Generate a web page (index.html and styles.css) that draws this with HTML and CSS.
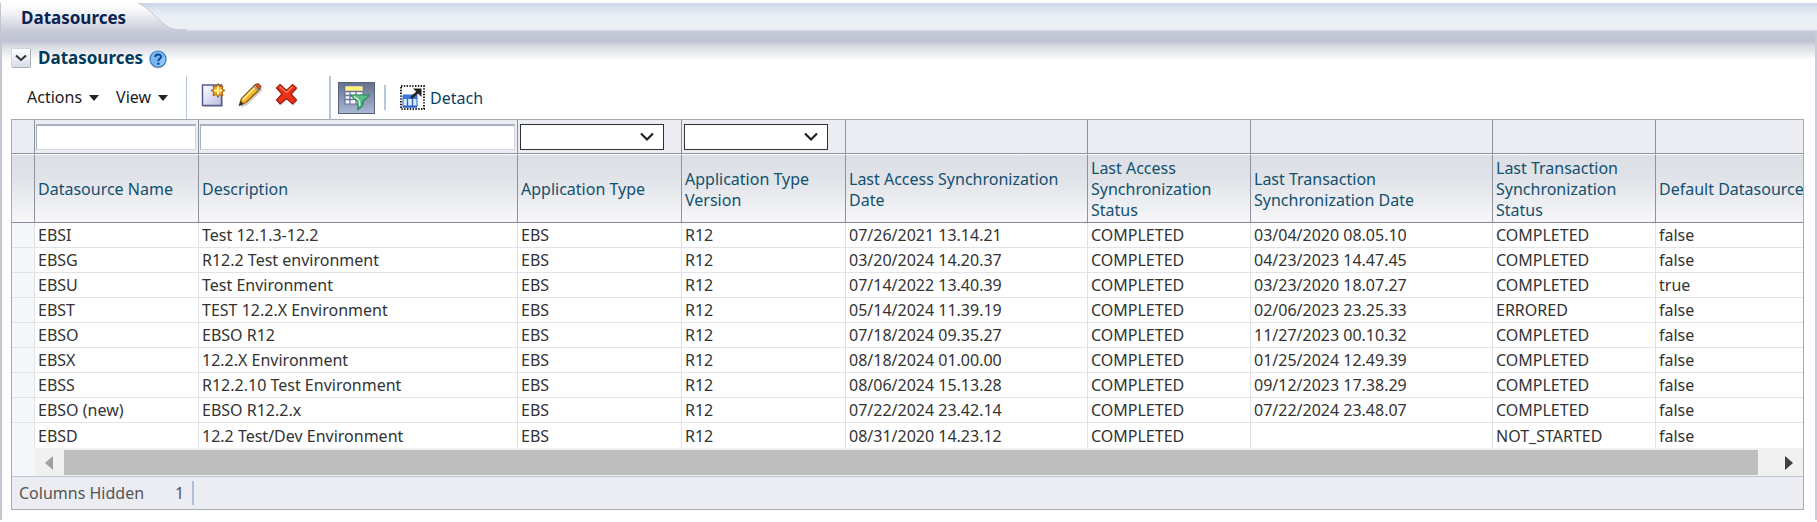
FILE: index.html
```html
<!DOCTYPE html>
<html lang="en">
<head>
<meta charset="utf-8">
<title>Datasources</title>
<link rel="stylesheet" href="styles.css">
</head>
<body>
<header class="tabbar">
  <a class="tab" href="#datasources">Datasources</a>
  <svg class="tab-edge" width="50" height="28" viewBox="0 0 50 28" aria-hidden="true">
    <defs>
      <linearGradient id="edge" x1="0" y1="0" x2="0" y2="1"><stop offset="0" stop-color="#fff"/><stop offset=".35" stop-color="#f2f3f7"/><stop offset="1" stop-color="#c9ccda"/></linearGradient>
    </defs>
    <path d="M0 0H1C11 4 17 13 28 22C33 26 38 27 50 27V28H0Z" fill="url(#edge)"/>
    <path d="M1 0C11 4 17 13 28 22C33 26 38 27 50 27" fill="none" stroke="#c3c6cf"/>
  </svg>
</header>
<main class="panel" id="datasources">
  <div class="heading">
    <button class="disclose" type="button" aria-label="Collapse Datasources"><svg width="12" height="8" viewBox="0 0 12 8"><path d="M1 1.500L6 6L11 1.500" fill="none" stroke="#333" stroke-width="2"/></svg></button>
    <h1 class="title">Datasources</h1>
    <button class="help" type="button" aria-label="Help"><svg width="18" height="19" viewBox="0 0 18 19">
      <defs><linearGradient id="help" x1="0" y1="0" x2="1" y2="1"><stop offset="0" stop-color="#8cc4f5"/><stop offset=".5" stop-color="#77b3f0"/><stop offset="1" stop-color="#a9ddff"/></linearGradient></defs>
      <circle cx="9" cy="10" r="8.500" fill="#a8adb5"/><circle cx="9" cy="9" r="8" fill="url(#help)" stroke="#3a7bc4" stroke-width="1.200"/>
      <path d="M6.200 7C6.200 3.600 12 3.600 12 6.800C12 8.900 9.300 8.800 9.300 11.200" fill="none" stroke="#0d4a94" stroke-width="2"/><circle cx="9.300" cy="13.700" r="1.300" fill="#0d4a94"/>
    </svg></button>
  </div>

  <div class="toolbar">
    <div class="group menus">
      <button class="menu" type="button">Actions<svg width="10" height="6" viewBox="0 0 10 6"><path d="M0 0H10L5 6Z" fill="#222"/></svg></button>
      <button class="menu" type="button">View<svg width="10" height="6" viewBox="0 0 10 6"><path d="M0 0H10L5 6Z" fill="#222"/></svg></button>
    </div>
    <div class="group edits">
      <button class="icon" type="button" aria-label="Create"><svg width="24" height="26" viewBox="0 0 24 26">
        <defs><linearGradient id="page" x1="0" y1="0" x2="1" y2="1"><stop offset="0" stop-color="#fff"/><stop offset="1" stop-color="#b9bde6"/></linearGradient></defs>
        <path d="M3 4.500H22V25H3Z" fill="#ccc"/><path d="M1.500 3H20.500V23.500H1.500Z" fill="url(#page)" stroke="#55598f" stroke-width="1.500"/>
        <path d="M17 1.500L18.500 4.500L22 4L21 7L24 8.500L21 10L22 13.500L18.500 12.500L17 15.500L15.500 12.500L12 13.500L13 10L10 8.500L13 7L12 4L15.500 4.500Z" fill="#f4a81c" stroke="#a65a12"/><path d="M17 4.500V12.500M13 8.500H21" stroke="#fff3a0" stroke-width="2"/>
      </svg></button>
      <button class="icon" type="button" aria-label="Edit"><svg width="24" height="26" viewBox="0 0 24 26">
        <path d="M3 24.500L9 22L24 7" fill="none" stroke="#ccc" stroke-width="2"/>
        <path d="M1.500 23L3.500 16.500L17 3L21.500 7.500L8 20.500Z" fill="#f6b42a" stroke="#8d5a10" stroke-width="1.300"/><path d="M4.500 18L18 4.500" stroke="#ffe98a" stroke-width="1.800"/>
        <path d="M17 3C19 1 20.500 1.500 22 3C23.500 4.500 23 6 21.500 7.500Z" fill="#d8502a" stroke="#8a4325"/><path d="M16 4.500L20.300 8.700" stroke="#999" stroke-width="1.500"/><path d="M1 24L2.500 19L6 22Z" fill="#3c2c18"/>
      </svg></button>
      <button class="icon" type="button" aria-label="Delete"><svg width="24" height="26" viewBox="0 0 24 26">
        <path d="M6 3.500L12 9L18.500 3L22.500 7L17 13L22.500 19L18.500 23.500L12 17.500L6 23.500L2 19L8 13L2 7Z" fill="#ccc"/>
        <path d="M5 2.500L11.500 8.500L17.500 2.500L21.500 6L16 12L21.500 18L17.500 22L11.500 16.500L5 22L1.500 18L7 12L1.500 6Z" fill="#ee3217" stroke="#9c1d10" stroke-width="1.200"/><path d="M4.500 4.500L11.500 10.500L17.500 4.500" fill="none" stroke="#ff7a50" stroke-width="1.500"/>
      </svg></button>
    </div>
    <div class="group views">
      <button class="filter" type="button" aria-label="Query by Example" aria-pressed="true"><svg width="26" height="26" viewBox="0 0 26 26">
        <path d="M1 1H19V19H1Z" fill="#fff" stroke="#6a6fa8" stroke-width="1.200"/><path d="M1.500 1.500H18.500V6H1.500Z" fill="#fff27a"/><path d="M1 6.500H19M1 10.500H19M1 14.500H19M6 6.500V19M12 6.500V19" stroke="#6a6fa8" stroke-width="1.300"/>
        <path d="M7 10H25C24.500 13 19 15 18.500 17V21L14 24.500V17C13.500 15 7.500 13 7 10Z" fill="#5dbd86" stroke="#268a55" stroke-width="1.200"/><path d="M10 11.500C13 14 15.500 15 15.500 17V21" stroke="#c9f2d9" stroke-width="1.500" fill="none"/>
      </svg></button>
      <span class="divider"></span>
      <button class="detach" type="button"><svg width="25" height="25" viewBox="0 0 25 25">
        <path d="M1 1H24V24H1Z" fill="#fff" stroke="#222" stroke-width="2" stroke-dasharray="1.400 1.400"/>
        <path d="M3 10H17V22H3Z" fill="#dcebff" stroke="#2b63c8"/><path d="M3 10H17V14H3Z" fill="#3a78e0"/><path d="M7.500 14V22M12.500 14V22" stroke="#2b63c8" stroke-width="1.300"/><path d="M3 21.500H17" stroke="#2b63c8" stroke-width="2"/>
        <path d="M11 13L19 6" stroke="#222" stroke-width="2.500"/><path d="M13 3.500H21.500V12Z" fill="#222"/>
      </svg>Detach</button>
    </div>
  </div>

  <section class="grid">
    <div class="scroller">
      <table class="data">
        <colgroup><col class="c-gutter"><col class="c-name"><col class="c-desc"><col class="c-type"><col class="c-type"><col class="c-date"><col class="c-status"><col class="c-date"><col class="c-status"><col></colgroup>
        <thead>
          <tr class="query">
            <td></td>
            <td><input class="box" type="text" aria-label="Filter Datasource Name"></td>
            <td><input class="box" type="text" aria-label="Filter Description"></td>
            <td><span class="pick"><select class="choice" aria-label="Filter Application Type"><option></option></select><svg class="chev" width="14" height="10" viewBox="0 0 14 10"><path d="M1 1.500L7 7.500L13 1.500" fill="none" stroke="#222" stroke-width="2.200"/></svg></span></td>
            <td><span class="pick"><select class="choice" aria-label="Filter Application Type Version"><option></option></select><svg class="chev" width="14" height="10" viewBox="0 0 14 10"><path d="M1 1.500L7 7.500L13 1.500" fill="none" stroke="#222" stroke-width="2.200"/></svg></span></td>
            <td></td><td></td><td></td><td></td><td></td>
          </tr>
          <tr class="names"><td></td><th scope="col">Datasource Name</th><th scope="col">Description</th><th scope="col">Application Type</th><th scope="col">Application Type Version</th><th scope="col">Last Access Synchronization Date</th><th scope="col">Last Access Synchronization Status</th><th scope="col">Last Transaction Synchronization Date</th><th scope="col">Last Transaction Synchronization Status</th><th class="nowrap" scope="col">Default Datasource</th></tr>
        </thead>
        <tbody>
          <tr><td></td><td>EBSI</td><td>Test 12.1.3-12.2</td><td>EBS</td><td>R12</td><td>07/26/2021 13.14.21</td><td>COMPLETED</td><td>03/04/2020 08.05.10</td><td>COMPLETED</td><td>false</td></tr>
          <tr><td></td><td>EBSG</td><td>R12.2 Test environment</td><td>EBS</td><td>R12</td><td>03/20/2024 14.20.37</td><td>COMPLETED</td><td>04/23/2023 14.47.45</td><td>COMPLETED</td><td>false</td></tr>
          <tr><td></td><td>EBSU</td><td>Test Environment</td><td>EBS</td><td>R12</td><td>07/14/2022 13.40.39</td><td>COMPLETED</td><td>03/23/2020 18.07.27</td><td>COMPLETED</td><td>true</td></tr>
          <tr><td></td><td>EBST</td><td>TEST 12.2.X Environment</td><td>EBS</td><td>R12</td><td>05/14/2024 11.39.19</td><td>COMPLETED</td><td>02/06/2023 23.25.33</td><td>ERRORED</td><td>false</td></tr>
          <tr><td></td><td>EBSO</td><td>EBSO R12</td><td>EBS</td><td>R12</td><td>07/18/2024 09.35.27</td><td>COMPLETED</td><td>11/27/2023 00.10.32</td><td>COMPLETED</td><td>false</td></tr>
          <tr><td></td><td>EBSX</td><td>12.2.X Environment</td><td>EBS</td><td>R12</td><td>08/18/2024 01.00.00</td><td>COMPLETED</td><td>01/25/2024 12.49.39</td><td>COMPLETED</td><td>false</td></tr>
          <tr><td></td><td>EBSS</td><td>R12.2.10 Test Environment</td><td>EBS</td><td>R12</td><td>08/06/2024 15.13.28</td><td>COMPLETED</td><td>09/12/2023 17.38.29</td><td>COMPLETED</td><td>false</td></tr>
          <tr><td></td><td>EBSO (new)</td><td>EBSO R12.2.x</td><td>EBS</td><td>R12</td><td>07/22/2024 23.42.14</td><td>COMPLETED</td><td>07/22/2024 23.48.07</td><td>COMPLETED</td><td>false</td></tr>
          <tr><td></td><td>EBSD</td><td>12.2 Test/Dev Environment</td><td>EBS</td><td>R12</td><td>08/31/2020 14.23.12</td><td>COMPLETED</td><td></td><td>NOT_STARTED</td><td>false</td></tr>
        </tbody>
      </table>
    </div>
    <div class="scrollbar">
      <button class="arrow" type="button" aria-label="Scroll left"><svg width="8" height="14" viewBox="0 0 8 14"><path d="M8 0V14L0 7Z" fill="#a0a0a0"/></svg></button>
      <div class="thumb"></div>
      <button class="arrow right" type="button" aria-label="Scroll right"><svg width="8" height="14" viewBox="0 0 8 14"><path d="M0 0V14L8 7Z" fill="#404040"/></svg></button>
    </div>
    <footer class="status"><span>Columns Hidden</span><span class="count">1</span></footer>
  </section>
</main>
</body>
</html>
```
FILE: styles.css
```css
* { box-sizing: border-box; }

body {
  margin: 0;
  padding-top: 3px;
  background: #fff;
  color: #333;
  font: 16px/20px "Noto Sans", "Open Sans", sans-serif;
}

button {
  display: flex;
  align-items: center;
  margin: 0;
  padding: 0;
  border: 0;
  background: none;
  color: inherit;
  font: inherit;
}

.tabbar {
  display: flex;
  height: 28px;
  border-left: 1px solid #c4c6cc;
  background: linear-gradient(#ccd6e6, #e2e9f3 30%, #eaf0f5 50%, #ecf0f4 90%, #d8dbe5);
}

.tab {
  padding: 5px 0 3px 20px;
  width: 136px;
  background: linear-gradient(#fff, #f2f3f7 35%, #c9ccda);
  color: #0a2350;
  font-size: 17px;
  font-weight: bold;
  text-decoration: none;
}

.panel {
  padding: 16px 11px 10px 9px;
  border-left: 2px solid #c5c7d0;
  border-right: 2px solid #c9cdda;
  background: linear-gradient(#c6c9d8, #bfc2d0 10px, #d9dbe3 15px, #fff 30px);
}

.heading {
  display: flex;
  align-items: center;
  height: 22px;
}

.disclose {
  justify-content: center;
  width: 20px;
  height: 20px;
  border: 1px solid #d3d6de;
  border-right-color: #a9aebb;
  border-bottom-color: #a9aebb;
  border-radius: 2px;
  background: linear-gradient(#fff, #d9dce6);
}

.title {
  margin: 0 6px 0 7px;
  color: #003a5c;
  font-size: 17px;
  line-height: 20px;
}

.help { margin-top: 2px; }

.toolbar {
  display: flex;
  height: 50px;
  padding-top: 7px;
}

.group {
  display: flex;
  align-items: center;
}

.menus {
  gap: 17px;
  padding: 0 0 2px 16px;
  width: 175px;
  color: #1c1c1c;
}

.menu { gap: 7px; white-space: nowrap; }
.menu svg { margin-top: 3px; }

.edits {
  gap: 13px;
  width: 143px;
  padding: 0 0 6px 14px;
  border-left: 1px solid #b8c6dd;
}

.views {
  gap: 9px;
  padding-left: 7px;
  border-left: 2px solid #b8c6dd;
}

.filter {
  justify-content: center;
  width: 37px;
  height: 32px;
  border: 1px solid #56617a;
  background: linear-gradient(#66728a, #a9b7d6);
}

.divider {
  width: 2px;
  height: 25px;
  background: #b8c6dd;
}

.detach {
  gap: 5px;
  margin-left: 5px;
  color: #0b4264;
}

.grid {
  border: 1px solid #a8abb0;
  background: #fff;
}

.scroller { overflow: hidden; }

.data {
  width: 100%;
  table-layout: fixed;
  border-collapse: separate;
  border-spacing: 0;
}

.c-gutter { width: 23px; }
.c-name { width: 164px; }
.c-desc { width: 319px; }
.c-type { width: 164px; }
.c-date { width: 242px; }
.c-status { width: 163px; }

.data td,
.data th {
  height: 25px;
  padding: 0 3px;
  border-right: 1px solid #e0e1e4;
  text-align: left;
  white-space: nowrap;
}

.data tr > :last-child { padding-right: 0; border-right: 0; }
.data tbody td { border-bottom: 1px solid #e2e3e6; }
.data tbody tr:last-child td { border-bottom: 0; }
.data tbody td:first-child { background: #f6f7fa; }

.data .query td {
  height: 34px;
  padding: 0 2px 0 1px;
  border-right-color: #8e929c;
  border-bottom: 1px solid #8e929c;
  background: #ecedf3;
}

.data .names > * {
  height: 69px;
  padding-top: 2px;
  border-top: 1px solid #fff;
  border-right-color: #8e929c;
  border-bottom: 1px solid #858998;
  background: linear-gradient(#dcdfe5, #e0e3e8 35%, #f7f7fa);
  color: #12506f;
  font-weight: normal;
  line-height: 21px;
  white-space: normal;
}

.data .names .nowrap { white-space: nowrap; }

.box {
  display: block;
  width: 100%;
  height: 26px;
  border: 1px solid #d0d5de;
  border-top: 2px solid #a7b0bd;
  border-left-color: #a7b0bd;
  background: #fff;
  font: inherit;
}

.pick {
  display: grid;
  align-items: center;
  width: 144px;
  margin-left: 1px;
}

.choice {
  grid-area: 1 / 1;
  width: 100%;
  height: 26px;
  border: 1px solid #333;
  border-radius: 0;
  background: #fff;
  appearance: none;
  font: inherit;
}

.chev {
  grid-area: 1 / 1;
  justify-self: end;
  margin-right: 10px;
  pointer-events: none;
}

.scrollbar {
  display: flex;
  align-items: stretch;
  height: 28px;
  padding: 2px 0 1px;
  border-left: 23px solid #f6f7fa;
  background: #f1f1f1;
}

.arrow { width: 29px; padding-left: 10px; }
.arrow.right { width: 45px; padding-left: 27px; }
.thumb { flex: 1; background: #bebebe; }

.status {
  display: flex;
  align-items: center;
  height: 33px;
  padding-left: 7px;
  border-top: 1px solid #bac4d5;
  background: #ecedf3;
  color: #555;
}

.count {
  margin-left: 31px;
  padding: 2px 8px 2px 0;
  border-right: 2px solid #b0bed6;
}
```
